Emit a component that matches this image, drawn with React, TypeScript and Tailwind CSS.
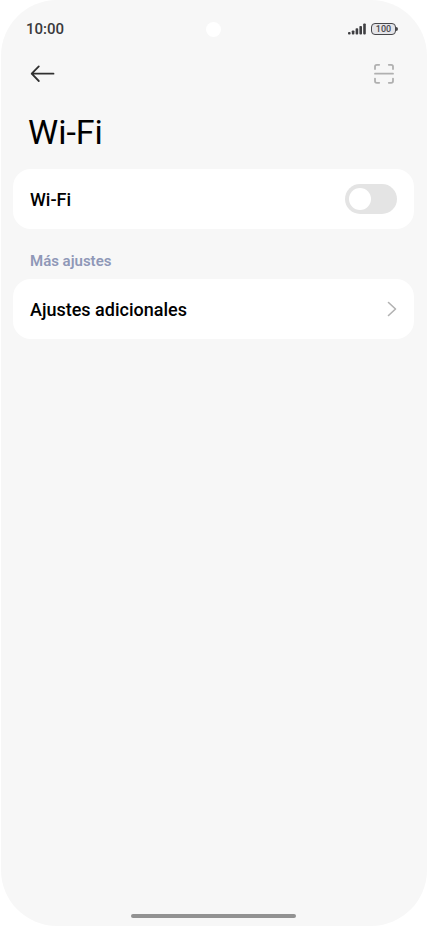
// App.tsx
import { useState } from 'react'
import type { ReactNode } from 'react'

function SignalIcon() {
  return (
    <svg width="18" height="12" viewBox="0 0 18 12" fill="#3f3f42" aria-hidden="true">
      <rect x="0" y="9" width="2.6" height="2.5" rx="0.9" />
      <rect x="3.8" y="7.4" width="2.6" height="4.1" rx="0.9" />
      <rect x="7.6" y="5.2" width="2.6" height="6.3" rx="0.9" />
      <rect x="11.4" y="2.9" width="2.6" height="8.6" rx="0.9" />
      <rect x="15.2" y="0.4" width="2.6" height="11.1" rx="0.9" />
    </svg>
  )
}

function Battery({ level }: { level: number }) {
  return (
    <div className="flex items-center">
      <span className="flex h-3 w-[25px] items-center justify-center rounded border border-[#47474a] bg-[#e4e4e8] text-[9px] leading-none font-medium text-[#4a4a4d]">
        {level}
      </span>
      <span className="h-1 w-0.5 rounded-r-full bg-[#47474a]" />
    </div>
  )
}

function StatusBar() {
  return (
    <div className="grid h-[58px] grid-cols-3 items-center px-[25px] text-[#3a3a3c]">
      <span className="text-[15px] leading-5 font-medium">10:00</span>
      <span className="size-[15px] justify-self-center rounded-full bg-white" />
      <div className="mr-1 flex items-center gap-[5px] justify-self-end">
        <SignalIcon />
        <Battery level={100} />
      </div>
    </div>
  )
}

function Card({ children }: { children: ReactNode }) {
  return <div className="mr-[13px] ml-3 rounded-[18px] bg-white">{children}</div>
}

export default function App() {
  const [enabled, setEnabled] = useState(false)

  return (
    <div className="min-h-screen bg-white pl-px font-['Roboto',sans-serif]">
      <div className="flex min-h-screen flex-col rounded-[56px] bg-[#f7f7f7]">
        <StatusBar />

        <header className="flex h-8 items-center justify-between pr-8 pl-[29px]">
          <button type="button" aria-label="Atrás">
            <svg width="26" height="18" viewBox="0 0 26 18" fill="none" stroke="#303030" strokeWidth="1.8" strokeLinecap="round" strokeLinejoin="round">
              <path d="M23.5 8.7H1.7M8.8 1.4L1.7 8.7L8.8 16" />
            </svg>
          </button>
          <button type="button" aria-label="Escanear">
            <svg width="22" height="22" viewBox="0 0 22 22" fill="none" stroke="#b0b0b0" strokeWidth="1.8" strokeLinecap="round">
              <path d="M2 6V3.6Q2 1.8 3.8 1.8H6.2M15.8 1.8H18.2Q20 1.8 20 3.6V6M20 15.6V18Q20 19.8 18.2 19.8H15.8M6.2 19.8H3.8Q2 19.8 2 18V15.6M2 10.7H20" />
            </svg>
          </button>
        </header>

        <main className="flex-1 text-black">
          <h1 className="mt-[22px] mb-[17px] pl-[27px] text-[34px] leading-10">Wi-Fi</h1>

          <Card>
            <label className="flex h-[60px] cursor-pointer items-center justify-between px-[17px] text-lg font-medium">
              <span className="pt-0.5">Wi-Fi</span>
              <input
                type="checkbox"
                role="switch"
                checked={enabled}
                onChange={(e) => setEnabled(e.target.checked)}
                className="flex h-[30px] w-[52px] cursor-pointer appearance-none items-center rounded-full bg-[#e4e4e4] px-1 before:size-[22px] before:rounded-full before:bg-white checked:justify-end checked:bg-[#3482ff]"
              />
            </label>
          </Card>

          <h2 className="mt-[22px] mb-2 pl-[29px] text-[15px] leading-5 font-semibold text-[#8f98b7]">
            Más ajustes
          </h2>

          <Card>
            <button
              type="button"
              className="flex h-[60px] w-full items-center justify-between px-[17px] text-lg font-medium"
            >
              <span className="pt-0.5">Ajustes adicionales</span>
              <svg width="10" height="16" viewBox="0 0 10 16" fill="none" stroke="#b2b2b2" strokeWidth="1.6" strokeLinecap="round" strokeLinejoin="round" aria-hidden="true">
                <path d="M1.5 1.5L8.5 8L1.5 14.5" />
              </svg>
            </button>
          </Card>
        </main>

        <div className="mr-px mb-2 h-1 w-[165px] self-center rounded-full bg-[#929292]" />
      </div>
    </div>
  )
}
